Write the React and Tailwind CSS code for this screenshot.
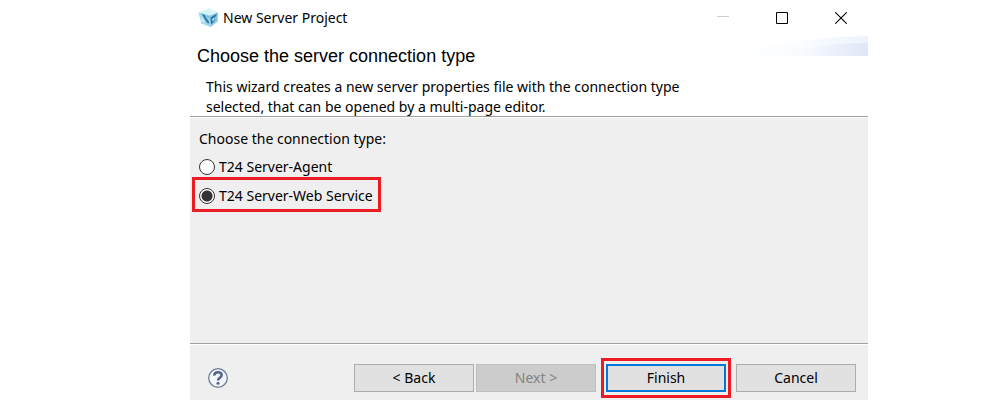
import { useState } from "react";

const options = [
  { id: "agent", label: "T24 Server-Agent" },
  { id: "web", label: "T24 Server-Web Service" },
];

function CubeIcon() {
  return (
    <svg viewBox="0 0 20 20" className="h-5 w-5 shrink-0" aria-hidden="true">
      <path d="M.5 4.500 11 .5 20 4.500 19.500 13.500 12.500 19 3.500 15.500Z" fill="#b9e3f0" />
      <path d="M.5 4.500 11 .5 20 4.500 12 7.500Z" fill="#dbf4fa" />
      <path d="M12 7.500 20 4.500 19.500 13.500 12.500 19Z" fill="#8cc8e2" />
      <path d="M.5 4.500 12 7.500 12.500 19 3.500 15.500Z" fill="#a6d8ea" />
      <path d="M3.500 5.500 7 7l2 4 1.500 1.500 1 3-2.500-.5L6.500 11Z" fill="#2f7fb2" />
      <path d="M12.500 9.500 19 5.500l-2 4-.5 3.500-3.500 3.500Z" fill="#28719f" />
      <path d="m2.500 9 3 2.500L7 15l-3.500-1.500ZM14 11l3-2-2 5Z" fill="#cdeef8" />
      <path d="m8 7 3.500 1v3L9.500 10Z" fill="#7dbbdc" />
    </svg>
  );
}

function TitleBar() {
  return (
    <header className="flex h-9 items-center justify-between pl-2 pr-[21px]">
      <div className="flex items-center gap-[5px]">
        <CubeIcon />
        <h1 className="text-sm">New Server Project</h1>
      </div>
      <div className="flex items-center gap-[47px]">
        <button type="button" aria-label="Minimize" disabled>
          <svg viewBox="0 0 12 12" className="h-3 w-3" shapeRendering="crispEdges">
            <path d="M0 4.500h12" stroke="#ccc" />
          </svg>
        </button>
        <button type="button" aria-label="Maximize">
          <svg viewBox="0 0 12 12" className="h-3 w-3">
            <path d="M.5.500h11v11H.5z" fill="none" stroke="#000" />
          </svg>
        </button>
        <button type="button" aria-label="Close">
          <svg viewBox="0 0 12 12" className="h-3 w-3">
            <path d="m.3.300 11.400 11.400M11.700.300.300 11.700" stroke="#000" strokeWidth="1.100" />
          </svg>
        </button>
      </div>
    </header>
  );
}

function Banner() {
  return (
    <section className="relative h-[81px] border-b border-[#a0a0a0] pl-[7px] pt-2.5">
      <svg viewBox="0 0 136 20" className="absolute right-0 top-0 h-5 w-[136px]" aria-hidden="true">
        <defs>
          <linearGradient id="swoosh">
            <stop offset="0" stopColor="#fff" />
            <stop offset=".4" stopColor="#f6f8fe" />
            <stop offset="1" stopColor="#dee6f8" />
          </linearGradient>
          <linearGradient id="swooshLight">
            <stop offset="0" stopColor="#fff" />
            <stop offset=".5" stopColor="#fafcff" />
            <stop offset="1" stopColor="#edf2fc" />
          </linearGradient>
        </defs>
        <path d="M0 20Q55 2 136 0v20Z" fill="url(#swooshLight)" />
        <path d="M40 20Q85 7 136 7v13Z" fill="url(#swoosh)" />
      </svg>
      <h2 className="font-['Liberation_Sans',sans-serif] text-lg leading-5">
        Choose the server connection type
      </h2>
      <p className="max-w-[500px] pl-[9px] pt-[11px] text-sm leading-5">
        This wizard creates a new server properties file with the connection type selected, that can
        be opened by a multi-page editor.
      </p>
    </section>
  );
}

const buttonStyles = {
  normal: "border border-[#adadad]",
  primary: "border-2 border-[#0078d7]",
};

function WizardButton({ children, variant = "normal", ...rest }) {
  return (
    <button
      type="button"
      className={`h-7 w-[120px] bg-[#e1e1e1] text-sm disabled:border-[#bfbfbf] disabled:bg-[#ccc] disabled:text-[#838383] ${buttonStyles[variant]}`}
      {...rest}
    >
      {children}
    </button>
  );
}

export default function App() {
  const [selected, setSelected] = useState("web");

  return (
    <div className="bg-white pl-[190px] pr-[136px] font-['Noto_Sans','Open_Sans',sans-serif] text-black">
      <main className="bg-white">
        <TitleBar />
        <Banner />
        <fieldset className="mt-px min-h-[225px] bg-[#efefef] px-0.5 pt-[11px]">
          <legend className="float-left w-full pl-[7px] text-sm leading-5">
            Choose the connection type:
          </legend>
          <div className="clear-both flex flex-col items-start pt-1">
            {options.map((option) => (
              <label
                key={option.id}
                className={`flex items-center gap-1 border-[3px] pl-1 pr-[5px] text-sm ${
                  option.id === "web"
                    ? "h-[35px] border-[#ed1c24] pt-0.5"
                    : "-mb-1 h-7 border-transparent"
                }`}
              >
                <input
                  type="radio"
                  name="connection"
                  value={option.id}
                  checked={selected === option.id}
                  onChange={() => setSelected(option.id)}
                  className="h-4 w-4 appearance-none rounded-full border border-[#333] bg-white checked:bg-[radial-gradient(circle,#333_4px,#333_5px,#fff_6px)]"
                />
                {option.label}
              </label>
            ))}
          </div>
        </fieldset>
        <footer className="border-t border-[#a0a0a0]">
          <div className="mt-px flex items-center justify-between bg-[#efefef] pb-0.5 pl-[18px] pr-3 pt-[13px]">
            <button type="button" aria-label="Help">
              <svg viewBox="0 0 20 20" className="h-5 w-5">
                <circle cx="10" cy="10" r="9.300" fill="#f4f5f8" stroke="#6d7c99" strokeWidth="1.300" />
                <path d="M6.300 7.600C6.200 3.200 13.700 3.200 13.700 7 13.700 9.700 10 9.600 10 12.500" fill="none" stroke="#53658a" strokeWidth="2.500" />
                <circle cx="10" cy="15.300" r="1.500" fill="#53658a" />
              </svg>
            </button>
            <div className="flex items-center">
              <WizardButton>&lt; Back</WizardButton>
              <div className="ml-0.5">
                <WizardButton disabled>Next &gt;</WizardButton>
              </div>
              <div className="mx-[5px] flex border-[3px] border-[#ed1c24] px-0.5 py-[3px]">
                <WizardButton variant="primary">Finish</WizardButton>
              </div>
              <WizardButton>Cancel</WizardButton>
            </div>
          </div>
        </footer>
      </main>
    </div>
  );
}
